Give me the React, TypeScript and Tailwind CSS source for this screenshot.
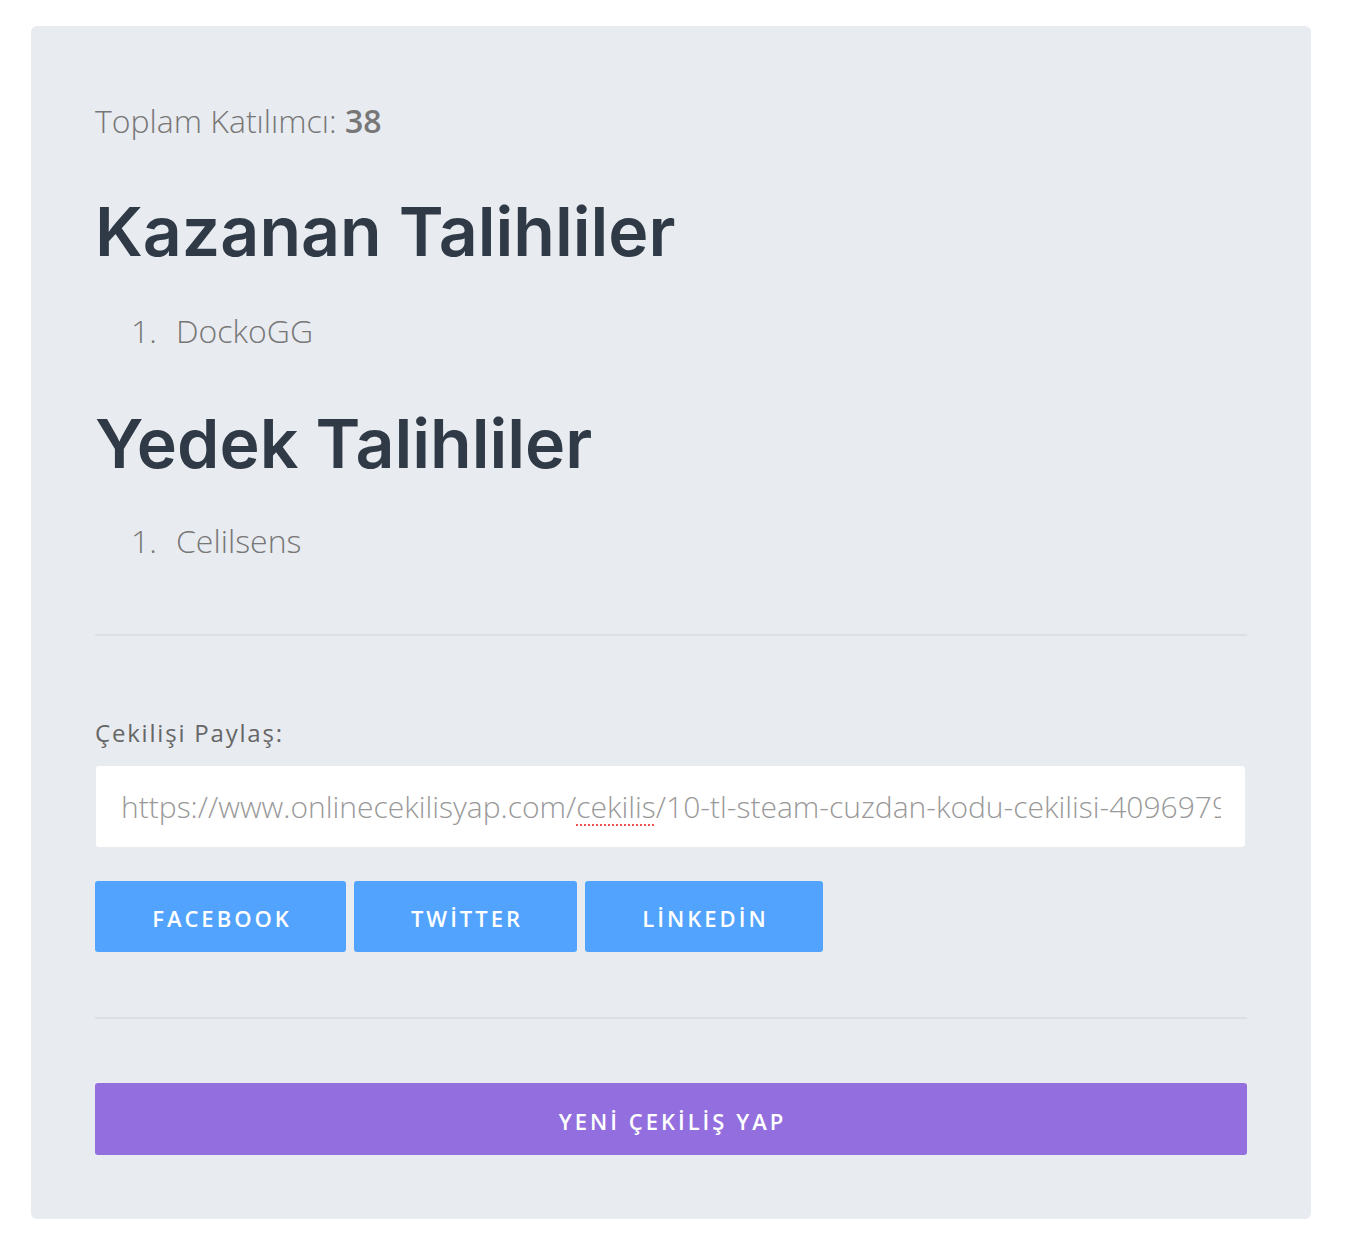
export default function App() {
    const winners = ["DockoGG"];
    const backups = ["Celilsens"];

    return (
        <div className="min-h-screen bg-white pt-[26px] pl-[31px] pr-[37px] pb-8 font-['Open_Sans',sans-serif]">
            <div className="rounded-md bg-[#e8ebf0] px-16 pt-[74px] pb-16">
                <p className="text-[32px] leading-[42px] font-light text-[#777]">
                    Toplam Katılımcı: <span className="font-semibold">38</span>
                </p>

                <h2 className="mt-[49px] font-['Inter',sans-serif] text-[68px] leading-[80px] font-semibold text-[#2f3a46]">
                    Kazanan Talihliler
                </h2>
                <ol className="mt-[39px] pl-[36px] text-[32px] leading-[42px] font-light text-[#777]">
                    {winners.map((name, i) => (
                        <li key={name} className="flex">
                            <span className="w-[45px]">{i + 1}.</span>
                            <span>{name}</span>
                        </li>
                    ))}
                </ol>

                <h2 className="mt-[51px] font-['Inter',sans-serif] text-[68px] leading-[80px] font-semibold text-[#2f3a46]">
                    Yedek Talihliler
                </h2>
                <ol className="mt-[37px] pl-[36px] text-[32px] leading-[42px] font-light text-[#777]">
                    {backups.map((name, i) => (
                        <li key={name} className="flex">
                            <span className="w-[45px]">{i + 1}.</span>
                            <span>{name}</span>
                        </li>
                    ))}
                </ol>

                <hr className="mt-[72px] border-0 h-[2px] bg-[#dcdfe4]" />

                <label className="mt-[80px] block text-[24px] leading-[33px] tracking-[1.8px] text-[#666]">
                    Çekilişi Paylaş:
                </label>
                <div className="mt-[17px] ml-px mr-[2px] h-[81px] rounded-[3px] bg-white flex items-center pl-[25px] pr-[24px] overflow-hidden">
                    <span className="whitespace-nowrap overflow-hidden text-[30px] font-light text-[#999]">
                        https://www.onlinecekilisyap.com/
                        <span className="underline decoration-dotted decoration-[#f05252] decoration-2 underline-offset-[6px]">cekilis</span>
                        /10-tl-steam-cuzdan-kodu-cekilisi-4096979
                    </span>
                </div>

                <div className="mt-[34px] flex gap-2">
                    {[
                        { label: "FACEBOOK", w: "w-[251px]" },
                        { label: "TWİTTER", w: "w-[223px]" },
                        { label: "LİNKEDİN", w: "w-[238px]" },
                    ].map((b) => (
                        <button
                            key={b.label}
                            className={`${b.w} h-[71px] rounded-[3px] bg-[#52a3fe] pl-[3px] pt-[4px] text-white text-[22px] font-semibold tracking-[3px]`}
                        >
                            {b.label}
                        </button>
                    ))}
                </div>

                <hr className="mt-[65px] border-0 h-[2px] bg-[#dcdfe4]" />

                <button className="mt-[64px] w-full h-[72px] rounded-[3px] bg-[#926ede] pl-[3px] pt-[4px] text-white text-[22px] font-semibold tracking-[3px]">
                    YENİ ÇEKİLİŞ YAP
                </button>
            </div>
        </div>
    );
}
